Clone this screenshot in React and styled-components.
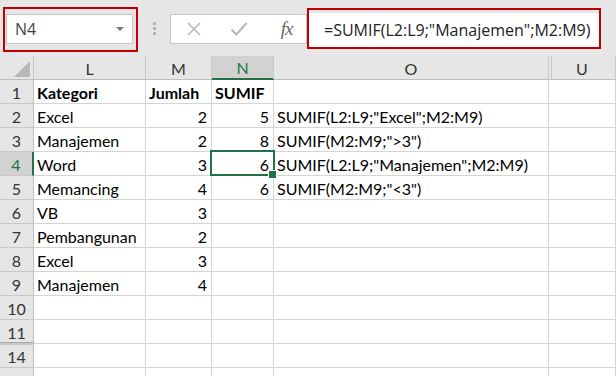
import React from "react";
import styled, { createGlobalStyle, css } from "styled-components";

const GlobalStyle = createGlobalStyle`
	html, body {
		margin: 0;
		padding: 0;
		background: #ffffff;
		overflow: hidden;
	}
	* {
		box-sizing: border-box;
	}
`;

const Page = styled.div`
	width: 616px;
	height: 376px;
	overflow: hidden;
	background: #ffffff;
`;

const Toolbar = styled.div`
	height: 56px;
	background: #e6e6e6;
	display: flex;
	align-items: flex-start;
	padding: 7px 0 0 3px;
	font-family: "Open Sans", "Noto Sans", sans-serif;
`;

const RedBox = styled.div`
	border: 2px solid #c00000;
	padding: ${(p) => p.$pad};
	width: ${(p) => p.$width}px;
	height: ${(p) => p.$height}px;
	margin-top: ${(p) => p.$top || 0}px;
`;

const NameBox = styled.div`
	height: 30px;
	background: #ffffff;
	border: 1px solid #c6c6c6;
	display: flex;
	align-items: center;
	justify-content: space-between;
	padding: 0 8px 0 8px;
	font-size: 16px;
	color: #444444;
`;

const Caret = styled.span`
	width: 0;
	height: 0;
	border-left: 4px solid transparent;
	border-right: 4px solid transparent;
	border-top: 4px solid #777777;
`;

const Grip = styled.div`
	width: 32px;
	height: 42px;
	display: flex;
	flex-direction: column;
	align-items: center;
	justify-content: center;
	gap: 2px;
	> span {
		width: 3px;
		height: 3px;
		background: #b3b3b3;
	}
`;

const ButtonBox = styled.div`
	margin-top: 7px;
	width: 137px;
	height: 30px;
	background: #ffffff;
	border: 1px solid #c6c6c6;
	display: flex;
	align-items: center;
`;

const IconButton = styled.div`
	width: 46px;
	height: 28px;
	display: flex;
	align-items: center;
	justify-content: center;
`;

const Fx = styled.span`
	font-family: "Liberation Serif", "DejaVu Serif", serif;
	font-style: italic;
	font-size: 19px;
	color: #666666;
	letter-spacing: -1px;
	margin-left: 6px;
`;

const FormulaInput = styled.div`
	height: 100%;
	background: #ffffff;
	display: flex;
	align-items: center;
	padding-left: 15px;
	font-size: 16px;
	color: #222222;
	white-space: nowrap;
`;

const Sheet = styled.div`
	display: grid;
	grid-template-columns: 34px 112px 66px 62px 275px 1fr;
	grid-auto-rows: 24px;
	font-family: Lato, "Liberation Sans", sans-serif;
	font-size: 16px;
	color: #000000;
`;

const HeadCell = styled.div`
	position: relative;
	background: ${(p) => (p.$active ? "#d2d2d2" : "#e6e6e6")};
	border-right: 1px solid #c8c8c8;
	border-bottom: ${(p) =>
		p.$active ? "2px solid #217346" : "1px solid #bdbdbd"};
	color: ${(p) => (p.$active ? "#217346" : "#333333")};
	display: flex;
	align-items: center;
	justify-content: center;
	padding-top: 1px;
	${(p) =>
		p.$gapBefore &&
		css`
			&::before {
				content: "";
				position: absolute;
				left: 2px;
				top: 0;
				bottom: 0;
				width: 1px;
				background: #c8c8c8;
			}
		`}
`;

const Corner = styled(HeadCell)`
	&::after {
		content: "";
		position: absolute;
		right: 3px;
		bottom: 2px;
		width: 0;
		height: 0;
		border-left: 16px solid transparent;
		border-bottom: 16px solid #b8b8b8;
	}
`;

const RowHead = styled.div`
	position: relative;
	background: ${(p) => (p.$active ? "#d2d2d2" : "#e6e6e6")};
	border-right: ${(p) =>
		p.$active ? "2px solid #217346" : "1px solid #bdbdbd"};
	border-bottom: 1px solid #c8c8c8;
	color: ${(p) => (p.$active ? "#217346" : "#333333")};
	display: flex;
	align-items: center;
	justify-content: center;
	padding-top: 1px;
	${(p) =>
		p.$gapBefore &&
		css`
			border-top: 1px solid #c8c8c8;
			&::before {
				content: "";
				position: absolute;
				left: 0;
				right: 0;
				top: -3px;
				height: 1px;
				background: #aaaaaa;
			}
		`}
`;

const Cell = styled.div`
	position: relative;
	border-right: 1px solid #d4d4d4;
	border-bottom: 1px solid #d4d4d4;
	display: flex;
	align-items: center;
	justify-content: ${(p) => (p.$num ? "flex-end" : "flex-start")};
	padding: 1px 4px 0 3px;
	font-weight: ${(p) => (p.$bold ? 700 : 400)};
	white-space: nowrap;
	overflow: visible;
	${(p) =>
		p.$selected &&
		css`
			&::after {
				content: "";
				position: absolute;
				left: -2px;
				top: -2px;
				right: -2px;
				bottom: -1px;
				border: 2px solid #217346;
			}
			&::before {
				content: "";
				position: absolute;
				right: -4px;
				bottom: -4px;
				width: 7px;
				height: 7px;
				background: #217346;
				border: 1px solid #ffffff;
				z-index: 1;
			}
		`}
`;

const columns = ["L", "M", "N", "O", "U"];

const rows = [
	{ n: 1, l: "Kategori", m: "Jumlah", s: "SUMIF", o: "", bold: true },
	{ n: 2, l: "Excel", m: 2, s: 5, o: 'SUMIF(L2:L9;"Excel";M2:M9)' },
	{ n: 3, l: "Manajemen", m: 2, s: 8, o: 'SUMIF(M2:M9;">3")' },
	{ n: 4, l: "Word", m: 3, s: 6, o: 'SUMIF(L2:L9;"Manajemen";M2:M9)' },
	{ n: 5, l: "Memancing", m: 4, s: 6, o: 'SUMIF(M2:M9;"<3")' },
	{ n: 6, l: "VB", m: 3 },
	{ n: 7, l: "Pembangunan", m: 2 },
	{ n: 8, l: "Excel", m: 3 },
	{ n: 9, l: "Manajemen", m: 4 },
	{ n: 10 },
	{ n: 11 },
	{ n: 14, gap: true },
	{ n: 15 },
];

function XIcon() {
	return (
		<svg width="16" height="16" viewBox="0 0 16 16">
			<path d="M2 2 L14 14 M14 2 L2 14" stroke="#b9b9b9" strokeWidth="1.6" fill="none" />
		</svg>
	);
}

function CheckIcon() {
	return (
		<svg width="18" height="16" viewBox="0 0 18 16">
			<path d="M1.5 8.5 L6.5 13.5 L16.5 2" stroke="#b9b9b9" strokeWidth="2.2" fill="none" />
		</svg>
	);
}

export default function App() {
	return (
		<Page>
			<GlobalStyle />
			<Toolbar>
				<RedBox $pad="5px 3px 6px 1px" $width={135} $height={45}>
					<NameBox>
						<span>N4</span>
						<Caret />
					</NameBox>
				</RedBox>
				<Grip>
					<span />
					<span />
					<span />
				</Grip>
				<ButtonBox>
					<IconButton>
						<XIcon />
					</IconButton>
					<IconButton>
						<CheckIcon />
					</IconButton>
					<IconButton>
						<Fx>fx</Fx>
					</IconButton>
				</ButtonBox>
				<RedBox $pad="3px 0 0 0" $width={294} $height={41} $top={1}>
					<FormulaInput>=SUMIF(L2:L9;"Manajemen";M2:M9)</FormulaInput>
				</RedBox>
			</Toolbar>
			<Sheet>
				<Corner />
				{columns.map((c) => (
					<HeadCell key={c} $active={c === "N"} $gapBefore={c === "U"}>
						{c}
					</HeadCell>
				))}
				{rows.map((r) => (
					<React.Fragment key={r.n}>
						<RowHead $active={r.n === 4} $gapBefore={r.gap}>
							{r.n}
						</RowHead>
						<Cell $bold={r.bold}>{r.l}</Cell>
						<Cell $bold={r.bold} $num={!r.bold}>
							{r.m}
						</Cell>
						<Cell $bold={r.bold} $num={!r.bold} $selected={r.n === 4}>
							{r.s}
						</Cell>
						<Cell>{r.o}</Cell>
						<Cell />
					</React.Fragment>
				))}
			</Sheet>
		</Page>
	);
}
